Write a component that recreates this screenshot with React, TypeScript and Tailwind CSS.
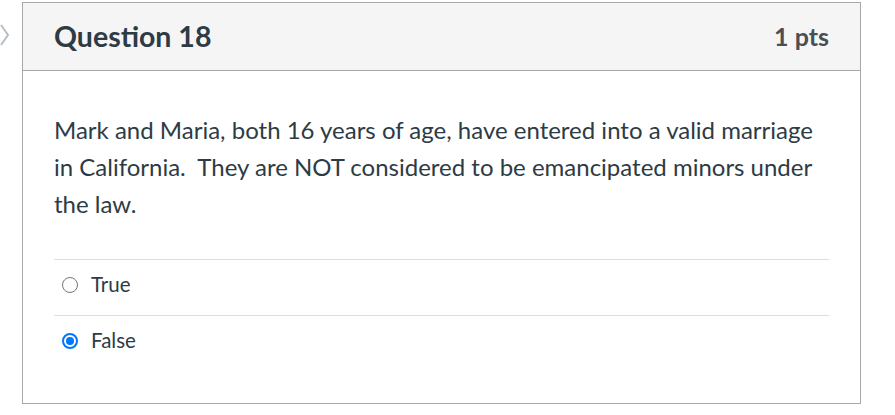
import React from 'react';

const answers = [
  { id: 'a1', label: 'True', checked: false },
  { id: 'a2', label: 'False', checked: true },
];

function Radio({ checked }: { checked: boolean }) {
  if (checked) {
    return (
      <span className="w-[16px] h-[16px] rounded-full border-[2px] border-[#0075ff] flex items-center justify-center shrink-0">
        <span className="w-[8px] h-[8px] rounded-full bg-[#0075ff]" />
      </span>
    );
  }
  return <span className="w-[16px] h-[16px] rounded-full border-[1.5px] border-[#767676] shrink-0" />;
}

export default function App() {
  return (
    <div className="w-[895px] h-[415px] bg-white font-['Lato','Liberation_Sans',sans-serif] text-[#2d3b45] flex items-start pt-[2px]">
      <div className="w-[22px] shrink-0 pt-[22px]">
        <svg width="10" height="22" viewBox="0 0 10 22" fill="none">
          <path d="M1 1 L8 11 L1 21" stroke="#b4bfc8" strokeWidth="2" />
        </svg>
      </div>
      <div className="w-[839px] h-[402px] border border-[#a8a8a8] flex flex-col">
        <div className="h-[68px] bg-[#f5f5f5] border-b border-[#a8a8a8] flex items-center justify-between px-[31px] shrink-0">
          <h2 className="text-[28.5px] font-bold leading-none">Question 18</h2>
          <div className="text-[25px] font-bold leading-none text-[#4a4f55]">1 pts</div>
        </div>
        <div className="px-[31px] pt-[40px]">
          <p className="text-[24px] leading-[37px] whitespace-pre-wrap">
            Mark and Maria, both 16 years of age, have entered into a valid marriage in California.  They are NOT considered to be emancipated minors under the law.
          </p>
          <div className="mt-[37px]">
            {answers.map((a) => (
              <label key={a.id} className="flex items-center h-[56px] pb-[6px] border-t border-[#dcdfe2] gap-[13px] pl-[8px]">
                <Radio checked={a.checked} />
                <span className="text-[20.5px]">{a.label}</span>
              </label>
            ))}
          </div>
        </div>
      </div>
    </div>
  );
}
